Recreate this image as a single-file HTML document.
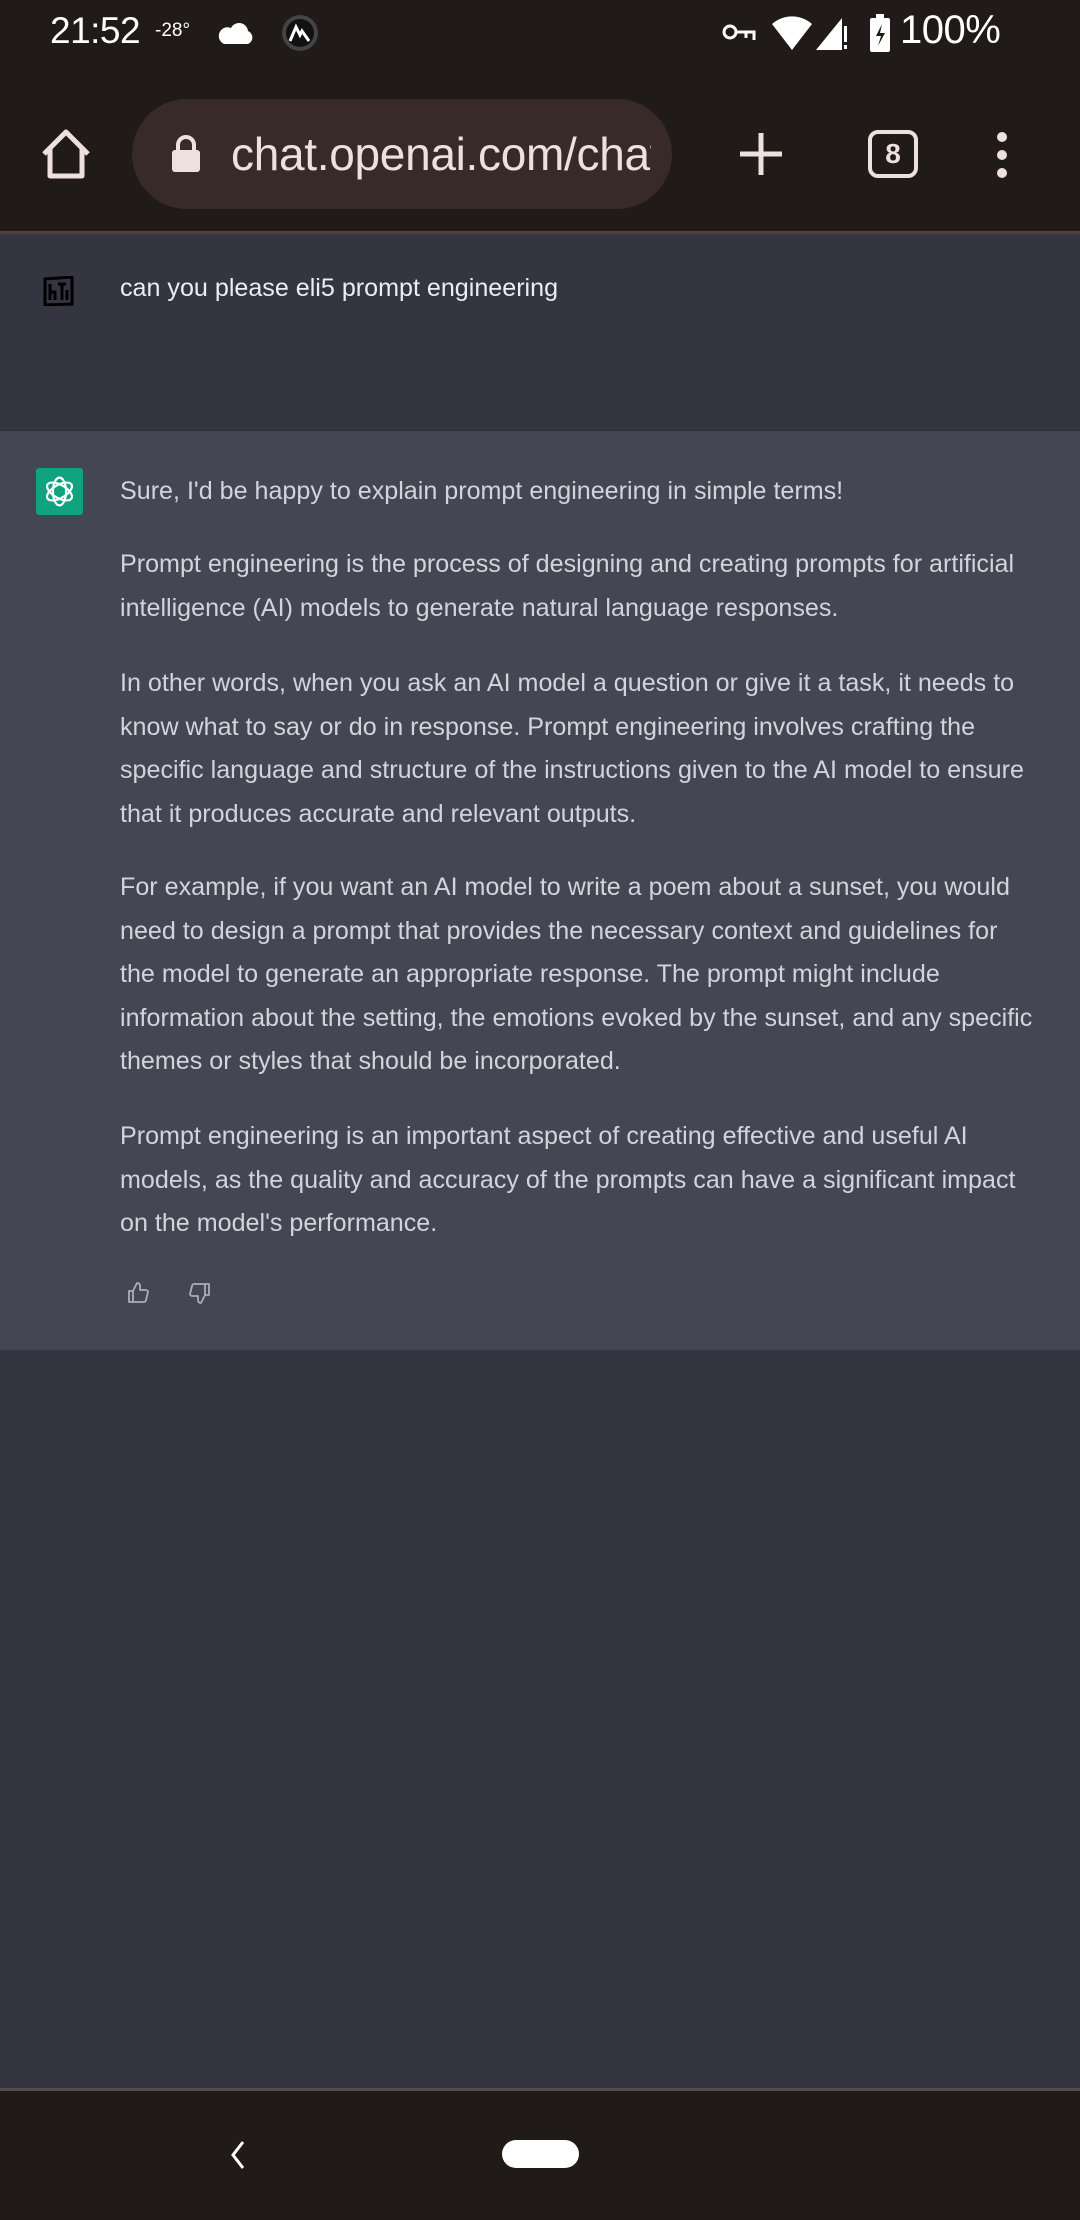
<!DOCTYPE html>
<html><head><meta charset="utf-8"><style>
*{margin:0;padding:0;box-sizing:border-box}
html,body{width:1080px;height:2220px;overflow:hidden;background:#343541;font-family:"Liberation Sans",sans-serif}
.abs{position:absolute}
.top{left:0;top:0;width:1080px;height:231px;background:#201a18}
.sep{left:0;top:231px;width:1080px;height:3px;background:#4e413c}
.pill{left:132px;top:99px;width:540px;height:110px;border-radius:55px;background:#372a27}
.url{left:231px;top:127px;font-size:46px;color:#eee0dc;white-space:nowrap;width:420px;overflow:hidden;letter-spacing:-0.3px}
.user{left:0;top:234px;width:1080px;height:197px;background:#343541;border-bottom:1px solid #2c2d36}
.asst{left:0;top:431px;width:1080px;height:919px;background:#444654}
.t{position:absolute;left:120px;font-size:25.1px;line-height:43.5px;color:#d1d5db;white-space:nowrap;letter-spacing:0}
.nav{left:0;top:2088px;width:1080px;height:132px;background:#201a18;border-top:3px solid #5a4a44}
</style></head><body>
<div class="abs top"></div>
<div class="abs" style="left:50px;top:10px;font-size:37px;color:#fff;letter-spacing:-0.5px">21:52</div>
<div class="abs" style="left:155px;top:20px;font-size:19px;color:#fff">-28°</div>
<svg class="abs" style="left:216px;top:18px" width="40" height="28"><path d="M8 26h24a7 7 0 0 0 0-13 9 9 0 0 0-17-3 8 8 0 0 0-7 16z" fill="#fff"/></svg>
<svg class="abs" style="left:280px;top:13px" width="40" height="40"><circle cx="20" cy="20" r="18" fill="#444"/><circle cx="20" cy="20" r="14" fill="#111"/><path d="M10 28l6-14 4 8 2-4 7 10" stroke="#fff" stroke-width="3" fill="none"/></svg>
<svg class="abs" style="left:722px;top:22px" width="36" height="24"><circle cx="8" cy="10" r="6" stroke="#fff" stroke-width="3" fill="none"/><path d="M14 10h18v8M24 10v6" stroke="#fff" stroke-width="3" fill="none"/></svg>
<svg class="abs" style="left:770px;top:16px" width="44" height="36"><path d="M2 8a30 30 0 0 1 40 0L22 34z" fill="#fff"/></svg>
<svg class="abs" style="left:814px;top:16px" width="36" height="36"><path d="M28 2L2 34h26z" fill="#fff"/><rect x="30" y="10" width="3" height="16" fill="#fff"/><rect x="30" y="29" width="3" height="4" fill="#fff"/></svg>
<svg class="abs" style="left:868px;top:14px" width="24" height="40"><rect x="2" y="4" width="20" height="34" rx="2" fill="#fff"/><rect x="8" y="0" width="8" height="5" fill="#fff"/><path d="M14 10l-6 12h5l-3 10 7-13h-5z" fill="#201a18"/></svg>
<div class="abs" style="left:900px;top:8px;font-size:40px;color:#fff;letter-spacing:-0.5px">100%</div>
<svg class="abs" style="left:40px;top:128px" width="52" height="52"><path d="M4 26L26 4l22 22M10 20v28h32V20" stroke="#eee0dc" stroke-width="5" fill="none" stroke-linejoin="round"/></svg>
<div class="abs pill"></div>
<svg class="abs" style="left:170px;top:134px" width="32" height="40"><path d="M8 16v-5a8 8 0 0 1 16 0v5" stroke="#eee0dc" stroke-width="4" fill="none"/><rect x="2" y="16" width="28" height="22" rx="3" fill="#eee0dc"/></svg>
<div class="abs url">chat.openai.com/chat</div>
<svg class="abs" style="left:738px;top:131px" width="46" height="46"><path d="M23 2v42M2 23h42" stroke="#eee0dc" stroke-width="5"/></svg>
<div class="abs" style="left:868px;top:130px;width:50px;height:48px;border:4px solid #eee0dc;border-radius:10px;color:#eee0dc;font-size:28px;font-weight:bold;text-align:center;line-height:40px">8</div>
<svg class="abs" style="left:992px;top:130px" width="20" height="50"><circle cx="10" cy="7" r="5" fill="#eee0dc"/><circle cx="10" cy="25" r="5" fill="#eee0dc"/><circle cx="10" cy="43" r="5" fill="#eee0dc"/></svg>
<div class="abs sep"></div>
<div class="abs user"></div>
<svg class="abs" style="left:43px;top:276px" width="32" height="30"><path d="M2 3l27-2v27l-27 1z" stroke="#000" stroke-width="3" fill="none"/><path d="M7 8v16M7 16h5v8M15 8h8M19 8v16M24 14v10" stroke="#000" stroke-width="3" fill="none"/></svg>
<div class="t" style="top:267px;color:#ececf1">can you please eli5 prompt engineering</div>
<div class="abs asst"></div>
<div class="abs" style="left:36px;top:468px;width:47px;height:47px;background:#10a37f;border-radius:3px"></div>
<svg class="abs" style="left:42px;top:474px" width="35" height="35" viewBox="0 0 24 24"><g fill="none" stroke="#fff" stroke-width="1.5"><ellipse cx="12" cy="12" rx="4.5" ry="9.5"/><ellipse cx="12" cy="12" rx="4.5" ry="9.5" transform="rotate(60 12 12)"/><ellipse cx="12" cy="12" rx="4.5" ry="9.5" transform="rotate(120 12 12)"/></g></svg>
<div class="t" style="top:470px">Sure, I'd be happy to explain prompt engineering in simple terms!</div>
<div class="t" style="top:543px">Prompt engineering is the process of designing and creating prompts for artificial<br>intelligence (AI) models to generate natural language responses.</div>
<div class="t" style="top:662px">In other words, when you ask an AI model a question or give it a task, it needs to<br>know what to say or do in response. Prompt engineering involves crafting the<br>specific language and structure of the instructions given to the AI model to ensure<br>that it produces accurate and relevant outputs.</div>
<div class="t" style="top:866px">For example, if you want an AI model to write a poem about a sunset, you would<br>need to design a prompt that provides the necessary context and guidelines for<br>the model to generate an appropriate response. The prompt might include<br>information about the setting, the emotions evoked by the sunset, and any specific<br>themes or styles that should be incorporated.</div>
<div class="t" style="top:1115px">Prompt engineering is an important aspect of creating effective and useful AI<br>models, as the quality and accuracy of the prompts can have a significant impact<br>on the model's performance.</div>
<svg class="abs" style="left:126px;top:1281px" width="24" height="24" viewBox="0 0 24 24"><path d="M7 10v11H3V10zM7 10l4-8c2 0 3 1 3 3v4h6c1 0 2 1 2 2l-2 8c0 1-1 2-2 2H7" stroke="#acacbe" stroke-width="1.8" fill="none" stroke-linejoin="round"/></svg>
<svg class="abs" style="left:188px;top:1281px" width="24" height="24" viewBox="0 0 24 24"><path d="M17 14V3h4v11zM17 14l-4 8c-2 0-3-1-3-3v-4H4c-1 0-2-1-2-2l2-8c0-1 1-2 2-2h11" stroke="#acacbe" stroke-width="1.8" fill="none" stroke-linejoin="round"/></svg>
<div class="abs nav"></div>
<svg class="abs" style="left:228px;top:2140px" width="20" height="30"><path d="M15 2L5 15l10 13" stroke="#fff" stroke-width="3" fill="none"/></svg>
<div class="abs" style="left:502px;top:2140px;width:77px;height:28px;border-radius:14px;background:#fff"></div>
</body></html>
